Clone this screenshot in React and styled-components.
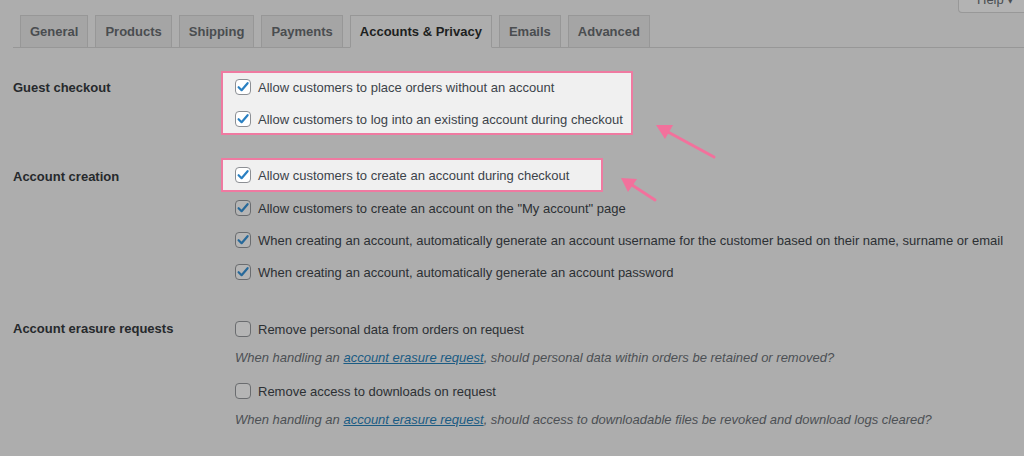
import styled, { createGlobalStyle } from "styled-components";

const GlobalStyle = createGlobalStyle`
  html, body {
    margin: 0;
    padding: 0;
    background: #adadad;
  }
  body {
    font-family: "Liberation Sans", Arial, sans-serif;
    font-size: 13px;
    color: #2c3034;
  }
`;

const tabs = [
  "General",
  "Products",
  "Shipping",
  "Payments",
  "Accounts & Privacy",
  "Emails",
  "Advanced",
];

function Check({ checked, lit }) {
  return (
    <CheckBox $lit={lit}>
      {checked && (
        <svg width="14" height="14" viewBox="0 0 14 14">
          <path
            d="M2.6 7.2 L5.6 10.2 L11.6 3.2"
            fill="none"
            stroke={lit ? "#2a80c2" : "#27699a"}
            strokeWidth="2.2"
            strokeLinecap="round"
            strokeLinejoin="round"
          />
        </svg>
      )}
    </CheckBox>
  );
}

function Option({ checked, lit, children }) {
  return (
    <OptionRow $lit={lit}>
      <Check checked={checked} lit={lit} />
      <span>{children}</span>
    </OptionRow>
  );
}

export default function App() {
  return (
    <>
      <GlobalStyle />
      <Page>
        <HelpBar>
          <HelpButton>Help ▾</HelpButton>
        </HelpBar>
        <TabNav>
          {tabs.map((t) => (
            <Tab key={t} $active={t === "Accounts & Privacy"}>
              {t}
            </Tab>
          ))}
        </TabNav>

        <Section $gap={23}>
          <Label $top={1}>Guest checkout</Label>
          <Content>
            <Highlight $width={412} $pad={0}>
              <Option checked lit>
                Allow customers to place orders without an account
              </Option>
              <Option checked lit>
                Allow customers to log into an existing account during checkout
              </Option>
            </Highlight>
          </Content>
        </Section>

        <Section $gap={23}>
          <Label $top={3}>Account creation</Label>
          <Content>
            <Highlight $width={382} $pad={1}>
              <Option checked lit>
                Allow customers to create an account during checkout
              </Option>
            </Highlight>
            <Option checked>
              Allow customers to create an account on the "My account" page
            </Option>
            <Option checked>
              When creating an account, automatically generate an account
              username for the customer based on their name, surname or email
            </Option>
            <Option checked>
              When creating an account, automatically generate an account
              password
            </Option>
          </Content>
        </Section>

        <Section $gap={25}>
          <Label $top={0}>Account erasure requests</Label>
          <Content>
            <Option>Remove personal data from orders on request</Option>
            <Description>
              When handling an <Link href="#">account erasure request</Link>,
              should personal data within orders be retained or removed?
            </Description>
            <Option>Remove access to downloads on request</Option>
            <Description>
              When handling an <Link href="#">account erasure request</Link>,
              should access to downloadable files be revoked and download logs
              cleared?
            </Description>
          </Content>
        </Section>

        <Arrows width="1024" height="456" viewBox="0 0 1024 456">
          <line x1="714" y1="157" x2="668" y2="132" />
          <polygon points="656,125 673,125 665,139" />
          <line x1="655" y1="200" x2="632" y2="185" />
          <polygon points="621,178 637,179 628,192" />
        </Arrows>
      </Page>
    </>
  );
}

const Page = styled.div`
  position: relative;
  width: 1024px;
  height: 456px;
  overflow: hidden;
`;

const HelpBar = styled.div`
  display: flex;
  justify-content: flex-end;
  height: 14px;
`;

const HelpButton = styled.div`
  margin-top: -10px;
  margin-right: -12px;
  width: 78px;
  height: 23px;
  padding-left: 18px;
  box-sizing: border-box;
  background: #b3b3b3;
  border: 1px solid #989898;
  border-top: none;
  border-radius: 0 0 4px 4px;
  font-size: 13px;
  line-height: 20px;
  color: #4a4e52;
`;

const TabNav = styled.nav`
  display: flex;
  align-items: flex-end;
  gap: 7px;
  margin-left: 13px;
  padding-left: 7px;
  height: 33px;
  border-bottom: 1px solid #979797;
`;

const Tab = styled.div`
  height: 33px;
  box-sizing: border-box;
  padding: 0 9px;
  margin-bottom: -1px;
  display: flex;
  align-items: center;
  font-size: 13px;
  font-weight: 700;
  border: 1px solid #979797;
  border-bottom-color: ${(p) => (p.$active ? "#adadad" : "#979797")};
  background: ${(p) => (p.$active ? "#adadad" : "#a5a5a5")};
  color: ${(p) => (p.$active ? "#1d1f21" : "#4a4d50")};
`;

const Section = styled.div`
  display: flex;
  margin-top: ${(p) => p.$gap}px;
`;

const Label = styled.div`
  width: 208px;
  padding-left: 13px;
  padding-top: ${(p) => p.$top}px;
  line-height: 32px;
  font-weight: 700;
  color: #26292c;
`;

const Content = styled.div`
  display: flex;
  flex-direction: column;
  align-items: flex-start;
  padding-left: 14px;
`;

const Highlight = styled.div`
  display: flex;
  flex-direction: column;
  gap: 4px;
  margin-left: -14px;
  width: ${(p) => p.$width}px;
  box-sizing: border-box;
  padding: ${(p) => p.$pad}px 0 ${(p) => p.$pad}px 12px;
  background: #f0f0f0;
  border: 2px solid #ef7aa1;
`;

const OptionRow = styled.div`
  display: flex;
  align-items: center;
  gap: 7px;
  height: ${(p) => (p.$lit ? "28px" : "32px")};
  white-space: nowrap;
  color: ${(p) => (p.$lit ? "#3c434a" : "#2c3034")};
`;

const CheckBox = styled.span`
  width: 16px;
  height: 16px;
  box-sizing: border-box;
  border: 1px solid ${(p) => (p.$lit ? "#8c8f94" : "#6a6c6f")};
  border-radius: 4px;
  background: ${(p) => (p.$lit ? "#ffffff" : "#b5b5b5")};
  display: flex;
  align-items: center;
  justify-content: center;
`;

const Description = styled.p`
  margin: 0 0 4px;
  line-height: 26px;
  font-style: italic;
  color: #4c5054;
  white-space: nowrap;
`;

const Link = styled.a`
  color: #1a5b83;
  text-decoration: underline;
`;

const Arrows = styled.svg`
  position: absolute;
  left: 0;
  top: 0;
  pointer-events: none;
  line {
    stroke: #f2719c;
    stroke-width: 3;
    stroke-linecap: round;
  }
  polygon {
    fill: #f2719c;
  }
`;
